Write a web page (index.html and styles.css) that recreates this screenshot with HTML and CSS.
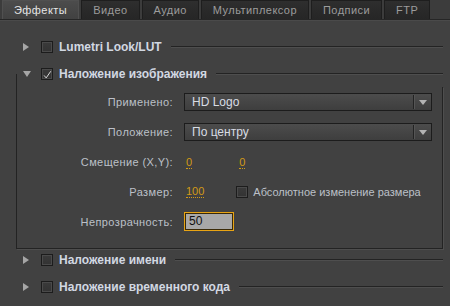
FILE: index.html
```html
<!DOCTYPE html>
<html lang="ru">
<head>
    <meta charset="UTF-8">
    <title>Эффекты</title>
    <link rel="stylesheet" href="styles.css">
</head>
<body>
    <div class="tabs">
        <div class="tab active">Эффекты</div>
        <div class="tab">Видео</div>
        <div class="tab">Аудио</div>
        <div class="tab">Мультиплексор</div>
        <div class="tab">Подписи</div>
        <div class="tab">FTP</div>
    </div>

    <div class="panel">
        <div class="head">
            <span class="arrow right"></span>
            <span class="check"></span>
            <span class="title">Lumetri Look/LUT</span>
            <span class="rule"></span>
        </div>

        <div class="group">
            <div class="head in-group">
                <span class="gutter"></span>
                <span class="arrow down"></span>
                <span class="check on">
                    <svg width="12" height="12" viewBox="0 0 12 12"><path d="M2.5 6.5 L5 9.5 L10.5 1.5" fill="none" stroke="#d8d8d8" stroke-width="1.2"/></svg>
                </span>
                <span class="title">Наложение изображения</span>
                <span class="rule top"></span>
            </div>
            <div class="box">
                <div class="form">
                    <div class="label">Применено:</div>
                    <div class="field">
                        <div class="select"><span>HD Logo</span><span class="sel-btn"></span></div>
                    </div>

                    <div class="label">Положение:</div>
                    <div class="field">
                        <div class="select"><span>По центру</span><span class="sel-btn"></span></div>
                    </div>

                    <div class="label">Смещение (X,Y):</div>
                    <div class="field">
                        <span class="num">0</span>
                        <span class="num second">0</span>
                    </div>

                    <div class="label short">Размер:</div>
                    <div class="field short">
                        <span class="num">100</span>
                        <span class="check small"></span>
                        <span class="opt">Абсолютное изменение размера</span>
                    </div>

                    <div class="label short">Непрозрачность:</div>
                    <div class="field short">
                        <div class="input">50</div>
                    </div>
                </div>
            </div>
        </div>

        <div class="head after-group">
            <span class="arrow right"></span>
            <span class="check"></span>
            <span class="title">Наложение имени</span>
            <span class="rule"></span>
        </div>

        <div class="head">
            <span class="arrow right"></span>
            <span class="check"></span>
            <span class="title">Наложение временного кода</span>
            <span class="rule"></span>
        </div>
    </div>
</body>
</html>
```

FILE: styles.css
```css
body {
    margin: 0;
    background-color: #414141;
    font-family: "Liberation Sans", Arial, sans-serif;
    font-size: 11px;
    color: #b8bcc2;
}
.tabs {
    display: flex;
    gap: 2px;
    height: 19px;
    padding-left: 2px;
    background-color: #3c3c3c;
    border-bottom: 1px solid #262626;
    box-shadow: 0 1px 0 #4a4a4a;
}
.tab {
    height: 19px;
    line-height: 19px;
    padding: 0 11px;
    box-sizing: border-box;
    background: linear-gradient(#2e2e2e, #262626);
    border: 1px solid #1e1e1e;
    border-bottom: none;
    color: #9c9c9c;
    letter-spacing: 0.45px;
}
.tab.active {
    background: linear-gradient(#4c4c4c, #414141);
    border-color: #505050;
    color: #e6e6e6;
}
.panel {
    padding-top: 13px;
}
.head {
    display: flex;
    align-items: center;
    height: 27px;
    padding-left: 23px;
    padding-right: 7px;
}
.head.after-group {
    margin-top: -3px;
}
.head.in-group {
    padding-left: 0;
    padding-right: 0;
}
.gutter {
    width: 7px;
    align-self: stretch;
    background: linear-gradient(to right, #232323 1px, transparent 1px) no-repeat bottom left / 100% 50%;
}
.arrow {
    width: 0;
    height: 0;
    margin-right: 11px;
}
.arrow.right {
    border-top: 4px solid transparent;
    border-bottom: 4px solid transparent;
    border-left: 6px solid #a6a6a6;
    margin-right: 12px;
}
.arrow.down {
    border-left: 4px solid transparent;
    border-right: 4px solid transparent;
    border-top: 6px solid #a6a6a6;
    margin-right: 10px;
}
.check {
    width: 12px;
    height: 12px;
    box-sizing: border-box;
    border: 1px solid #1c1c1c;
    background: linear-gradient(#3a3a3a, #333);
    box-shadow: inset 0 0 0 1px #4a4a4a;
    display: flex;
}
.title {
    margin-left: 6px;
    font-weight: bold;
    font-size: 12px;
    color: #d2d8e2;
}
.rule {
    flex: 1;
    height: 1px;
    margin-left: 9px;
    background-color: #232323;
    box-shadow: 0 1px 0 #4e4e4e;
}
.rule.top {
    align-self: flex-end;
    margin-bottom: 13px;
    margin-right: 0;
}
.group {
    margin: 0 7px 0 16px;
}
.box {
    border: 1px solid #232323;
    border-top: none;
    box-shadow: 1px 1px 0 #4e4e4e;
    padding-bottom: 11px;
}
.form {
    display: grid;
    grid-template-columns: 156px 1fr;
    grid-auto-rows: 30px;
    column-gap: 11px;
}
.label {
    display: flex;
    align-items: center;
    justify-content: flex-end;
    height: 30px;
    letter-spacing: 0.4px;
    color: #bcc0c8;
}
.field {
    display: flex;
    align-items: center;
    height: 30px;
    padding-right: 10px;
}
.label.short, .field.short {
    height: 29px;
}
.select {
    flex: 1;
    display: flex;
    align-items: center;
    justify-content: space-between;
    height: 18px;
    box-sizing: border-box;
    padding-left: 7px;
    border: 1px solid #1c1c1c;
    background: linear-gradient(#4c4c4c, #3e3e3e);
    color: #d8dce4;
    font-size: 12px;
}
.sel-btn {
    width: 17px;
    height: 14px;
    border-left: 1px solid #232323;
    box-shadow: inset 1px 0 0 #555;
    display: flex;
    align-items: center;
    justify-content: center;
}
.sel-btn::after {
    content: "";
    border-left: 4px solid transparent;
    border-right: 4px solid transparent;
    border-top: 5px solid #b4b4b4;
}
.num {
    color: #d29a16;
    border-bottom: 1px dotted #d29a16;
    line-height: 12px;
    margin-left: 2px;
}
.num.second {
    margin-left: 47px;
}
.check.small {
    margin-left: 32px;
}
.opt {
    margin-left: 5px;
    color: #bcc0c8;
}
.input {
    width: 50px;
    height: 19px;
    box-sizing: border-box;
    border: 1px solid #e8a414;
    box-shadow: inset 0 0 0 1px #3a2a08;
    background-color: #a8a8a8;
    color: #101010;
    padding-left: 4px;
    line-height: 17px;
    font-size: 12px;
}
```
